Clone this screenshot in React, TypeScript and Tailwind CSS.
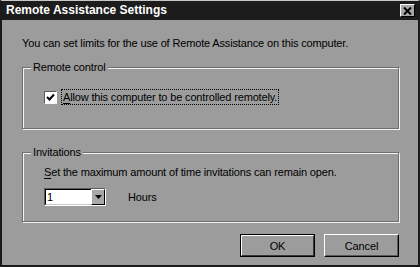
import React from "react";

const font = { fontFamily: '"Liberation Sans", Arial, sans-serif' };
const t = "text-[11px] leading-[14px] tracking-[-0.15px] text-black";

function Etched({ label, className, children }: { label: string; className: string; children: React.ReactNode }) {
  return (
    <div className={"relative border border-[#6e6e6e] shadow-[1px_1px_0_#f4f4f4,inset_1px_1px_0_#f4f4f4] " + className}>
      <span className="absolute left-[8px] top-[-8px] bg-[#9c9c9c] px-[2px] text-[11px] leading-[14px] tracking-[-0.15px] text-black">
        {label}
      </span>
      {children}
    </div>
  );
}

export default function App() {
  return (
    <div className="w-[420px] h-[267px] bg-[#9c9c9c] overflow-hidden" style={font}>
      <div className="w-[420px] h-[267px] border-l-2 border-r-2 border-b-2 border-t border-t-[#c8c8c8] border-l-[#1a1a1a] border-r-[#1a1a1a] border-b-[#1a1a1a] flex flex-col">
        <div className="h-[19px] bg-[#1c1c1c] flex items-center justify-between pl-[4px] pr-[3px]">
          <span className="text-white font-bold text-[12px] leading-[15px]">Remote Assistance Settings</span>
          <div className="w-[15px] h-[13px] bg-[#a8a8a8] border border-t-white border-l-white border-r-black border-b-black flex items-center justify-center">
            <svg width="9" height="8" viewBox="0 0 9 8">
              <path d="M1 0.5 L8 7.5 M8 0.5 L1 7.5" stroke="#000" strokeWidth="2" />
            </svg>
          </div>
        </div>
        <div className="pl-[20px] pr-[19px] flex flex-col">
          <div className={"mt-[16px] " + t}>
            You can set limits for the use of Remote Assistance on this computer.
          </div>
          <Etched label="Remote control" className="mt-[17px] h-[62px] w-[377px]">
            <div className="pt-[21px] pl-[21px] flex items-center">
              <div className="w-[13px] h-[13px] bg-white border border-t-[#5a5a5a] border-l-[#5a5a5a] border-r-white border-b-white flex items-center justify-center">
                <svg width="9" height="9" viewBox="0 0 9 9">
                  <path d="M1 4 L3.5 6.5 L8 1.5" stroke="#000" strokeWidth="2" fill="none" />
                </svg>
              </div>
              <div className={"ml-[4px] border border-dotted border-black px-[1px] " + t}>
                <span className="underline underline-offset-2">A</span>llow this computer to be controlled remotely.
              </div>
            </div>
          </Etched>
          <Etched label="Invitations" className="mt-[23px] h-[70px] w-[377px]">
            <div className="pt-[12px] pl-[21px] flex flex-col">
              <div className={t}>
                <span className="underline underline-offset-2">S</span>et the maximum amount of time invitations can remain open.
              </div>
              <div className="mt-[9px] flex items-center">
                <div className="w-[62px] h-[18px] flex border border-t-[#5a5a5a] border-l-[#5a5a5a] border-r-white border-b-white">
                  <div className={"flex-1 bg-white border border-t-black border-l-black border-b-[#c8c8c8] border-r-0 pl-[1px] " + t}>
                    1
                  </div>
                  <div className="w-[14px] bg-[#a8a8a8] border border-t-white border-l-white border-r-black border-b-black flex items-center justify-center">
                    <svg width="7" height="4" viewBox="0 0 7 4">
                      <path d="M0 0 L7 0 L3.5 4 Z" fill="#000" />
                    </svg>
                  </div>
                </div>
                <div className={"ml-[22px] " + t}>Hours</div>
              </div>
            </div>
          </Etched>
          <div className="mt-[12px] flex justify-end gap-[9px] w-[377px]">
            <div className="w-[75px] h-[23px] border border-black">
              <div className={"w-full h-full border border-t-white border-l-white border-r-[#3a3a3a] border-b-[#3a3a3a] flex items-center justify-center " + t}>
                OK
              </div>
            </div>
            <div className="w-[75px] h-[23px] border border-t-white border-l-white border-r-black border-b-black">
              <div className={"w-full h-full border border-transparent border-r-[#5a5a5a] border-b-[#5a5a5a] flex items-center justify-center " + t}>
                Cancel
              </div>
            </div>
          </div>
        </div>
      </div>
    </div>
  );
}
